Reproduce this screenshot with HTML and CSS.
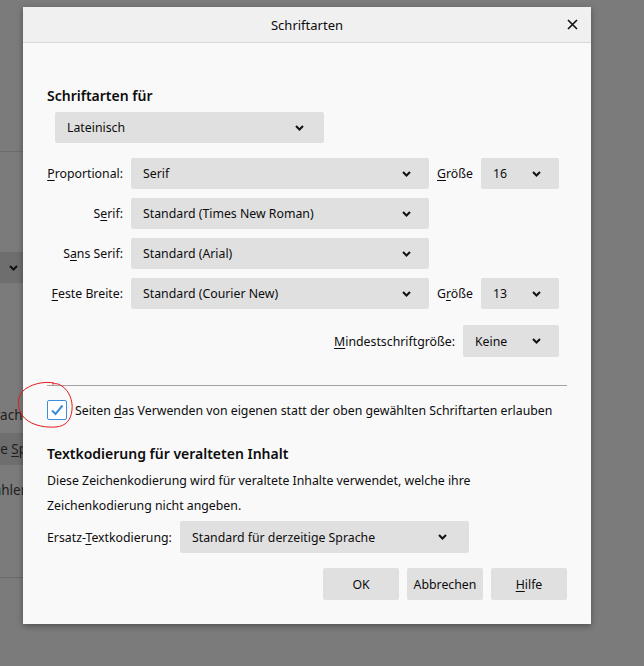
FILE: index.html
```html
<!DOCTYPE html>
<html lang="de">
<head>
<meta charset="utf-8">
<title>Schriftarten</title>
<link rel="stylesheet" href="styles.css">
</head>
<body>
<div class="backdrop">
  <div class="bg-top"></div>
  <div class="bg-select"><svg class="chev" width="9" height="6" viewBox="0 0 9 6"><path d="M1 1 L4.5 4.5 L8 1" fill="none" stroke="#111" stroke-width="2"/></svg></div>
  <div class="bg-text bg-t1"><span>Sprachi</span></div>
  <div class="bg-text bg-hl"><span>Alternative <u>S</u>p</span></div>
  <div class="bg-text bg-t2"><span>Wählen</span></div>
  <div class="bg-bottom"></div>
</div>

<div class="dialog">
  <div class="dlg-header">
    <span class="dlg-title">Schriftarten</span>
    <svg class="dlg-close" width="11" height="11" viewBox="0 0 11 11"><path d="M1 1 L10 10 M10 1 L1 10" stroke="#111" stroke-width="1.6"/></svg>
  </div>
  <div class="dlg-body">
    <h2 class="heading">Schriftarten für</h2>
    <div class="select select-lang"><span>Lateinisch</span><svg class="chev" width="9" height="6" viewBox="0 0 9 6"><path d="M1 1 L4.5 4.5 L8 1" fill="none" stroke="#111" stroke-width="2"/></svg></div>

    <div class="font-grid">
      <label class="lbl"><u>P</u>roportional:</label>
      <div class="select"><span>Serif</span><svg class="chev" width="9" height="6" viewBox="0 0 9 6"><path d="M1 1 L4.5 4.5 L8 1" fill="none" stroke="#111" stroke-width="2"/></svg></div>
      <label class="lbl-size"><u>G</u>röße</label>
      <div class="select"><span>16</span><svg class="chev" width="9" height="6" viewBox="0 0 9 6"><path d="M1 1 L4.5 4.5 L8 1" fill="none" stroke="#111" stroke-width="2"/></svg></div>

      <label class="lbl">S<u>e</u>rif:</label>
      <div class="select"><span>Standard (Times New Roman)</span><svg class="chev" width="9" height="6" viewBox="0 0 9 6"><path d="M1 1 L4.5 4.5 L8 1" fill="none" stroke="#111" stroke-width="2"/></svg></div>
      <span></span><span></span>

      <label class="lbl">S<u>a</u>ns Serif:</label>
      <div class="select"><span>Standard (Arial)</span><svg class="chev" width="9" height="6" viewBox="0 0 9 6"><path d="M1 1 L4.5 4.5 L8 1" fill="none" stroke="#111" stroke-width="2"/></svg></div>
      <span></span><span></span>

      <label class="lbl"><u>F</u>este Breite:</label>
      <div class="select"><span>Standard (Courier New)</span><svg class="chev" width="9" height="6" viewBox="0 0 9 6"><path d="M1 1 L4.5 4.5 L8 1" fill="none" stroke="#111" stroke-width="2"/></svg></div>
      <label class="lbl-size">G<u>r</u>öße</label>
      <div class="select"><span>13</span><svg class="chev" width="9" height="6" viewBox="0 0 9 6"><path d="M1 1 L4.5 4.5 L8 1" fill="none" stroke="#111" stroke-width="2"/></svg></div>
    </div>

    <div class="min-row">
      <label class="lbl-min"><u>M</u>indestschriftgröße:</label>
      <div class="select select-min"><span>Keine</span><svg class="chev" width="9" height="6" viewBox="0 0 9 6"><path d="M1 1 L4.5 4.5 L8 1" fill="none" stroke="#111" stroke-width="2"/></svg></div>
    </div>

    <hr class="sep">

    <div class="check-row">
      <span class="checkbox"><svg width="14" height="12" viewBox="0 0 14 12"><path d="M2 6.5 L5.5 10 L12.5 1.5" fill="none" stroke="#3a8fda" stroke-width="2"/></svg></span>
      <span class="check-label">Seiten <u>d</u>as Verwenden von eigenen statt der oben gewählten Schriftarten erlauben</span>
      <svg class="annot" width="64" height="52" viewBox="0 0 64 52"><path d="M38 3 C28 1, 14 4, 7 11 C1 17, 1 27, 6 35 C12 44, 26 48, 40 47 C50 46, 55 40, 56 30 C57 20, 53 11, 46 6 C43 4, 40 3, 36 4" fill="none" stroke="#e41b1b" stroke-width="1"/></svg>
    </div>

    <h2 class="heading heading-2">Textkodierung für veralteten Inhalt</h2>
    <p class="desc">Diese Zeichenkodierung wird für veraltete Inhalte verwendet, welche ihre Zeichenkodierung nicht angeben.</p>

    <div class="enc-row">
      <label class="lbl-enc">Ersatz-<u>T</u>extkodierung:</label>
      <div class="select select-enc"><span>Standard für derzeitige Sprache</span><svg class="chev" width="9" height="6" viewBox="0 0 9 6"><path d="M1 1 L4.5 4.5 L8 1" fill="none" stroke="#111" stroke-width="2"/></svg></div>
    </div>

    <div class="buttons">
      <button class="btn">OK</button>
      <button class="btn">Abbrechen</button>
      <button class="btn"><u>H</u>ilfe</button>
    </div>
  </div>
</div>
</body>
</html>
```

FILE: styles.css
```css
html, body {
  margin: 0;
  padding: 0;
}
body {
  width: 644px;
  height: 666px;
  overflow: hidden;
  background: #7b7b7b;
  font-family: "Noto Sans", "Open Sans", sans-serif;
  font-size: 12.3px;
  color: #0c0c0d;
  position: relative;
}
u { text-decoration: underline; text-underline-offset: 2px; }

/* dimmed page behind the dialog */
.backdrop {
  display: flex;
  flex-direction: column;
  width: 23px;
  overflow: hidden;
  color: #1e1e1e;
}
.bg-top {
  height: 151px;
  border-bottom: 1px solid #6c6c6c;
}
.bg-select {
  margin-top: 100px;
  height: 31px;
  background: #6e6e6e;
  display: flex;
  align-items: center;
  padding-left: 9px;
}
.bg-text {
  font-size: 13.5px;
  white-space: nowrap;
  height: 32px;
  line-height: 32px;
  display: flex;
  justify-content: flex-end;
}
.bg-text span { flex: none; }
.bg-t1 { margin-top: 116px; margin-right: -3px; }
.bg-hl { margin-top: 2px; background: #6e6e6e; margin-right: -4px; }
.bg-t2 { margin-top: 9px; margin-right: -6px; }
.bg-bottom {
  margin-top: 71px;
  height: 1px;
  background: #6a6a6a;
}

/* dialog */
.dialog {
  position: absolute;
  left: 23px;
  top: 7px;
  width: 568px;
  height: 617px;
  background: #f9f9f9;
  box-shadow: 0 2px 6px rgba(0,0,0,0.35);
  display: flex;
  flex-direction: column;
}
.dlg-header {
  height: 35px;
  background: #f0f0f0;
  border-bottom: 1px solid #d9d9d9;
  display: flex;
  align-items: center;
  justify-content: center;
  position: relative;
}
.dlg-title {
  font-size: 13px;
}
.dlg-close {
  position: absolute;
  right: 13px;
  top: 12px;
}
.dlg-body {
  padding: 43px 24px 24px 24px;
  display: flex;
  flex-direction: column;
}
.heading {
  margin: 0;
  font-size: 14px;
  font-weight: 600;
  line-height: 20px;
}
.select {
  height: 31px;
  background: #e0e0e0;
  border-radius: 2px;
  display: flex;
  align-items: center;
  justify-content: space-between;
  padding: 0 16px 0 12px;
  box-sizing: border-box;
}
.select-lang {
  width: 269px;
  margin: 6px 0 0 8px;
  padding-right: 20px;
}
.font-grid {
  margin-top: 15px;
  display: grid;
  grid-template-columns: 76px 298px 36px 78px;
  column-gap: 8px;
  row-gap: 9px;
  align-items: center;
}
.font-grid .select { padding-right: 18px; }
.lbl {
  text-align: right;
  white-space: nowrap;
}
.lbl-size { white-space: nowrap; }
.min-row {
  margin-top: 16px;
  display: flex;
  justify-content: flex-end;
  align-items: center;
  gap: 8px;
  padding-right: 8px;
}
.select-min {
  width: 96px;
  height: 32px;
  padding-right: 18px;
}
.sep {
  margin: 28px 0 0 0;
  border: 0;
  border-top: 1px solid #a3a3a3;
  height: 0;
}
.check-row {
  margin-top: 14px;
  display: flex;
  align-items: center;
  gap: 8px;
  position: relative;
}
.checkbox {
  width: 20px;
  height: 20px;
  box-sizing: border-box;
  border: 1px solid #3a8fda;
  border-radius: 2px;
  background: #fff;
  display: flex;
  align-items: center;
  justify-content: center;
}
.annot {
  position: absolute;
  left: -31px;
  top: -20px;
}
.heading-2 {
  margin-top: 24px;
}
.desc {
  margin: 4px 0 0 0;
  line-height: 25px;
  width: 450px;
}
.enc-row {
  margin-top: 3px;
  display: flex;
  align-items: center;
  gap: 8px;
}
.lbl-enc { width: 125px; white-space: nowrap; }
.select-enc {
  width: 289px;
  height: 32px;
  padding-left: 12px;
  padding-right: 22px;
}
.buttons {
  margin-top: 15px;
  display: flex;
  justify-content: flex-end;
  gap: 8px;
}
.btn {
  width: 76px;
  height: 32px;
  border: 0;
  border-radius: 2px;
  background: #e0e0e0;
  font-family: inherit;
  font-size: 12.3px;
  color: #0c0c0d;
  padding: 0;
}
```
